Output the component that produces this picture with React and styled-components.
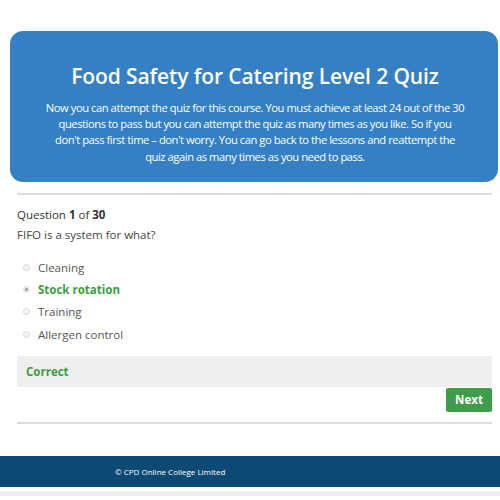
import React from "react";
import styled, { createGlobalStyle } from "styled-components";

const Global = createGlobalStyle`
  html, body { margin: 0; padding: 0; background: #fff; }
  body { font-family: "Open Sans", "Noto Sans", Arial, sans-serif; color: #333; }
`;

const Page = styled.div`
  width: 500px;
  height: 500px;
  overflow: hidden;
  padding-top: 31px;
  box-sizing: border-box;
`;

const Hero = styled.section`
  margin: 0 2px 0 10px;
  height: 151px;
  box-sizing: border-box;
  background: #3580c4;
  border-radius: 13px;
  color: #fff;
  text-align: center;
  padding: 30px 20px 0 22px;
`;

const Title = styled.h1`
  margin: 0;
  font-size: 21px;
  font-weight: 600;
  line-height: 30px;
  letter-spacing: -0.1px;
`;

const Intro = styled.p`
  margin: 9px auto 0;
  max-width: 419px;
  font-size: 11.2px;
  line-height: 16.2px;
  letter-spacing: -0.45px;
`;

const Content = styled.div`
  padding: 0 8px 0 17px;
`;

const Rule = styled.hr`
  margin: ${(p) => p.$mt || 0}px 0 0;
  border: 0;
  height: 2px;
  background: #dcdcdc;
`;

const QuestionNo = styled.div`
  margin-top: 11px;
  font-size: 11.5px;
  line-height: 17px;
  color: #333;
  b { font-weight: 700; }
`;

const QuestionText = styled.div`
  margin-top: 3px;
  font-size: 11.5px;
  line-height: 17px;
  color: #444;
`;

const Options = styled.ul`
  list-style: none;
  margin: 16px 0 0;
  padding: 0 0 0 6px;
  display: flex;
  flex-direction: column;
  gap: 5.2px;
`;

const Option = styled.li`
  display: flex;
  align-items: center;
  gap: 8px;
  height: 17px;
  font-size: 11.5px;
  color: ${(p) => (p.$correct ? "#3d9b45" : "#555")};
  font-weight: ${(p) => (p.$correct ? 700 : 400)};
`;

const Radio = styled.span`
  width: 5px;
  height: 5px;
  border-radius: 50%;
  border: 1px solid #dadada;
  background: ${(p) => (p.$checked ? "radial-gradient(circle, #999 0 1.2px, #eee 1.6px)" : "#f4f4f4")};
  box-sizing: content-box;
`;

const Feedback = styled.div`
  margin-top: 13px;
  height: 31px;
  background: #efefef;
  display: flex;
  align-items: center;
  padding-left: 9px;
  font-size: 11.5px;
  font-weight: 700;
  color: #3d9b45;
`;

const Actions = styled.div`
  display: flex;
  justify-content: flex-end;
  margin-top: 1px;
`;

const NextButton = styled.button`
  width: 46px;
  height: 24px;
  border: 0;
  border-radius: 2px;
  background: #3f9c4a;
  color: #fff;
  font-family: inherit;
  font-size: 11.5px;
  font-weight: 700;
  padding: 0;
`;

const Footer = styled.footer`
  margin-top: 32px;
  height: 31px;
  background: #0c4a75;
  display: flex;
  align-items: center;
  padding-left: 115px;
  color: #fff;
  font-size: 8px;
  border-bottom: 4px solid #fff;
  box-shadow: 0 5px 0 0 #eee;
`;

const options = [
  { label: "Cleaning" },
  { label: "Stock rotation", correct: true },
  { label: "Training" },
  { label: "Allergen control" },
];

export default function App() {
  return (
    <Page>
      <Global />
      <Hero>
        <Title>Food Safety for Catering Level 2 Quiz</Title>
        <Intro>
          Now you can attempt the quiz for this course. You must achieve at least 24 out of the 30
          questions to pass but you can attempt the quiz as many times as you like. So if you
          don't pass first time – don't worry. You can go back to the lessons and reattempt the
          quiz again as many times as you need to pass.
        </Intro>
      </Hero>
      <Content>
        <Rule $mt={11} />
        <QuestionNo>
          Question <b>1</b> of <b>30</b>
        </QuestionNo>
        <QuestionText>FIFO is a system for what?</QuestionText>
        <Options>
          {options.map((o) => (
            <Option key={o.label} $correct={o.correct}>
              <Radio $checked={o.correct} />
              {o.label}
            </Option>
          ))}
        </Options>
        <Feedback>Correct</Feedback>
        <Actions>
          <NextButton>Next</NextButton>
        </Actions>
        <Rule $mt={10} />
      </Content>
      <Footer>© CPD Online College Limited</Footer>
    </Page>
  );
}
